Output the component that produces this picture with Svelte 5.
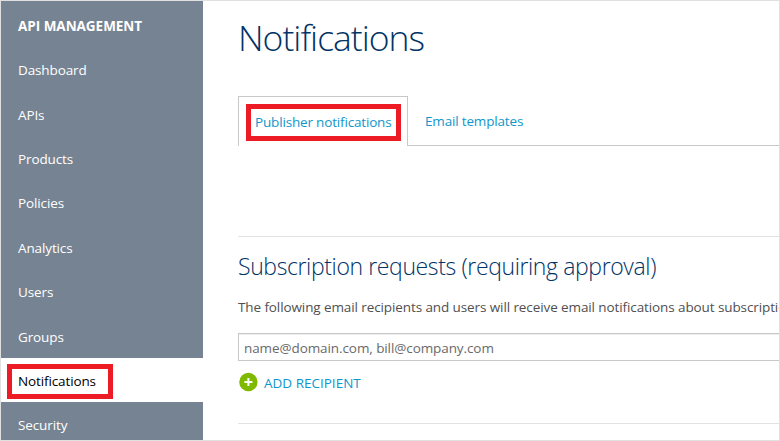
<script>
  const items = ['Dashboard', 'APIs', 'Products', 'Policies', 'Analytics', 'Users', 'Groups', 'Notifications', 'Security'];
  const current = 'Notifications';
</script>

<div class="frame">
  <nav class="sidebar">
    <div class="heading"><span>API MANAGEMENT</span></div>
    {#each items as item}
      <a class="item" class:active={item === current}>
        <span>{item}</span>
        {#if item === current}<i class="mark"></i>{/if}
      </a>
    {/each}
  </nav>

  <main class="content">
    <h1><span>Notifications</span></h1>
    <div class="tabs">
      <a class="tab selected"><span>Publisher notifications</span><i class="mark"></i></a>
      <a class="tab other"><span>Email templates</span></a>
    </div>
    <section>
      <h2><span>Subscription requests (requiring approval)</span></h2>
      <p><span>The following email recipients and users will receive email notifications about subscription</span></p>
      <div class="field"><span>name@domain.com, bill@company.com</span></div>
      <div class="add">
        <svg width="20" height="20" viewBox="0 0 20 20">
          <circle cx="10.4" cy="10" r="9.2" fill="#80ba00" />
          <path d="M10.4 6v8M6.4 10h8" stroke="#fff" stroke-width="2" fill="none" />
        </svg>
        <span>ADD RECIPIENT</span>
      </div>
    </section>
  </main>
</div>

<style>
  :global(body) { background: #fff; overflow: hidden; }
  .frame {
    box-sizing: border-box;
    width: 780px;
    height: 441px;
    border: 1px solid #e0e0e0;
    display: flex;
    overflow: hidden;
    background: #fff;
    font: 13.5px/20px "Open Sans", "Noto Sans", sans-serif;
    white-space: nowrap;
  }
  .sidebar {
    flex: 0 0 202px;
    background: #768392;
    color: #fff;
  }
  .heading {
    height: 46px;
    box-sizing: border-box;
    padding: 15px 0 0 17px;
    font-weight: 700;
    font-size: 13.5px;
    letter-spacing: -0.03px;
  }
  .item {
    position: relative;
    box-sizing: border-box;
    display: flex;
    align-items: center;
    height: 44.4px;
    padding: 2px 0 0 17px;
    letter-spacing: -0.12px;
  }
  .active { background: #fff; color: #000; }
  .mark {
    position: absolute;
    box-sizing: border-box;
    border: 5px solid #ed1c24;
  }
  .item .mark { left: 6px; top: 6px; width: 106px; height: 35px; }
  .content { flex: 1; min-width: 0; padding-left: 35px; }
  h1, h2, p { margin: 0; }
  h1 {
    height: 95px;
    box-sizing: border-box;
    padding-top: 12px;
    font-size: 35.5px;
    line-height: 48px;
    font-weight: 300;
    letter-spacing: -0.98px;
    color: #003366;
  }
  .tabs { display: flex; height: 50px; color: #0f96cb; letter-spacing: -0.17px; }
  .tab { position: relative; box-sizing: border-box; }
  .selected {
    width: 170px;
    border: 1px solid #c8c8c8;
    border-bottom: 0;
    padding: 15px 0 0 16px;
  }
  .selected .mark { left: 7px; top: 7px; width: 155px; height: 37px; }
  .other { flex: 1; border-bottom: 1px solid #c8c8c8; padding: 15px 0 0 17px; }
  section {
    margin-top: 90px;
    height: 188px;
    box-sizing: border-box;
    border-top: 1px solid #e2e2e2;
    border-bottom: 1px solid #e2e2e2;
    padding-top: 13px;
  }
  h2 {
    font-size: 23px;
    line-height: 32px;
    font-weight: 300;
    letter-spacing: -0.38px;
    color: #003366;
  }
  p { margin-top: 15px; color: #505050; letter-spacing: -0.1px; }
  .field {
    box-sizing: border-box;
    height: 28px;
    margin-top: 16px;
    border: 1px solid #c8c8c8;
    border-right: 0;
    box-shadow: inset 0 1px #eee;
    padding: 4px 0 0 5px;
    color: #6a6a6a;
    letter-spacing: -0.09px;
  }
  .add { display: flex; align-items: center; height: 20px; margin-top: 11px; color: #0f96cb; }
  .add svg { flex: none; margin-right: 6px; }
  .add span { padding-top: 2px; }
</style>
